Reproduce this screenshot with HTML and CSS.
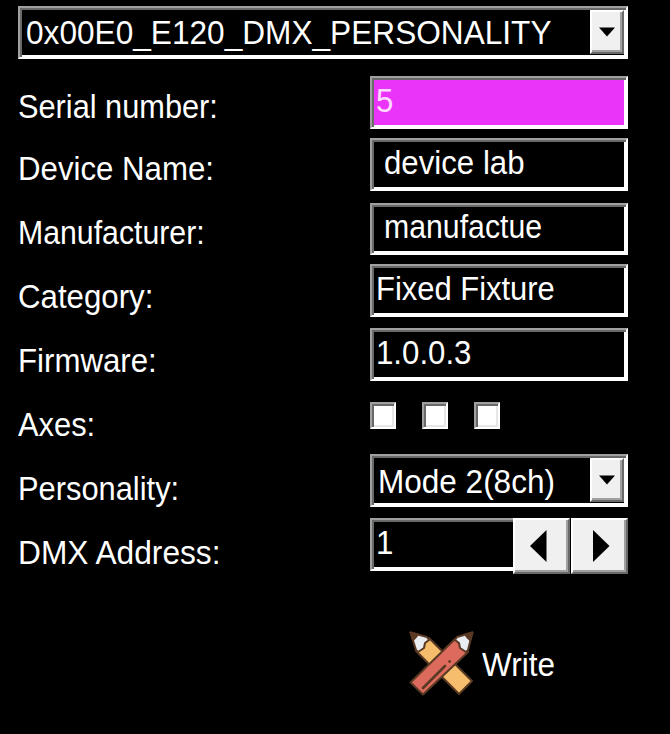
FILE: index.html
```html
<!DOCTYPE html>
<html lang="en">
<head>
<meta charset="utf-8">
<title>Device settings</title>
<link rel="stylesheet" href="styles.css">
</head>
<body>
<main class="panel">
  <div class="sunken combo parameter">
    <span class="text t-param">0x00E0_E120_DMX_PERSONALITY</span>
    <span class="drop"><svg width="16" height="10" viewBox="0 0 16 10"><path d="M0 .5H16L8 9.5Z"/></svg></span>
  </div>
  <div class="form">
    <div class="labels">
      <span class="text t-serial">Serial number:</span>
      <span class="text">Device Name:</span>
      <span class="text t-tight">Manufacturer:</span>
      <span class="text">Category:</span>
      <span class="text">Firmware:</span>
      <span class="text t-snug">Axes:</span>
      <span class="text t-snug">Personality:</span>
      <span class="text t-wide">DMX Address:</span>
    </div>
    <div class="fields">
      <div class="sunken serial"><span class="text">5</span></div>
      <div class="sunken device"><span class="text">device lab</span></div>
      <div class="sunken maker"><span class="text t-tight">manufactue</span></div>
      <div class="sunken category"><span class="text t-fixed">Fixed Fixture</span></div>
      <div class="sunken firmware"><span class="text">1.0.0.3</span></div>
      <div class="axes"><i class="check"></i><i class="check"></i><i class="check"></i></div>
      <div class="sunken combo personality">
        <span class="text t-mode">Mode 2(8ch)</span>
        <span class="drop"><svg width="16" height="10" viewBox="0 0 16 10"><path d="M0 .5H16L8 9.5Z"/></svg></span>
      </div>
      <div class="address">
        <div class="sunken number"><span class="text">1</span></div>
        <span class="step"><svg width="17" height="32" viewBox="0 0 17 32"><path d="M16.5 0V32L0 16Z"/></svg></span>
        <span class="step next"><svg width="17" height="32" viewBox="0 0 17 32"><path d="M0 0V32L16.5 16Z"/></svg></span>
      </div>
    </div>
  </div>
  <div class="write">
    <svg class="pencils" width="66" height="66" viewBox="0 0 66 66" stroke="#593923" stroke-width="2" stroke-linejoin="round">
      <path fill="#f5bd6c" d="M7 20L20 7L63 50L50 63Z"/>
      <path fill="#e9edf2" d="M1.500 1.500L18 6L20 9L16 12L15 17L9 21L7 19Z"/>
      <path fill="#593923" d="M1.500 1.500L9 3.500L7 6L4 9Z"/>
      <path fill="#dc6b5d" d="M46 8L59 21L14 63.500L1.500 51.500Z"/>
      <path fill="#e9edf2" d="M63.500 1.500L59 19L57 21L51 17L50 12L46 9L48 6Z"/>
      <path fill="#593923" d="M63.500 1.500L56 3.500L58 6L61 9Z"/>
      <path d="M14 57L36 35M40.500 30.500l.2-.2" fill="none" stroke-width="2.600" stroke-linecap="round"/>
    </svg>
    <span class="text t-mode">Write</span>
  </div>
</main>
</body>
</html>
```
FILE: styles.css
```css
* { box-sizing: border-box; }
body {
  margin: 0;
  background: #000;
  color: #fff;
  font: 34px/40px "Liberation Sans", Arial, sans-serif;
}
.panel { width: 670px; height: 734px; padding: 6px 42px 0 18px; }
.text {
  display: block;
  width: max-content;
  white-space: pre;
  transform: scaleX(.918);
  transform-origin: left;
}
.t-param { transform: scaleX(.93); }
.t-serial { transform: scaleX(.904); }
.t-tight { transform: scaleX(.89); }
.t-snug { transform: scaleX(.907); }
.t-wide { transform: scaleX(.932); }
.t-fixed { transform: scaleX(.91); }
.t-mode { transform: scaleX(.927); }
.sunken {
  height: 53px;
  border: 2px solid;
  border-color: #a0a0a0 #fff #fff #a0a0a0;
  box-shadow: inset 2px 2px #696969, inset -2px -2px #fff;
  padding: 2px 4px;
}
.combo { display: flex; justify-content: space-between; padding: 2px; }
.combo .text { flex: 0 1 auto; min-width: 0; margin: 2px 0 0 4px; }
.drop {
  flex: none;
  width: 34px;
  height: 44px;
  display: flex;
  align-items: center;
  justify-content: center;
  background: #f0f0f0;
  border: 2px solid;
  border-color: #fff #696969 #696969 #fff;
  box-shadow: inset -2px -2px #a0a0a0;
}
.form { display: flex; justify-content: space-between; padding-top: 17px; }
.labels { display: flex; flex-direction: column; gap: 24px; padding-top: 10px; }
.labels .t-serial { margin-bottom: -2px; }
.fields { width: 258px; }
.serial { background: #eb34fa; color: #ffd9ff; }
.device { margin-top: 9px; padding-left: 12px; }
.maker { height: 52px; margin-top: 12px; padding: 1px 4px 0 12px; }
.category { margin-top: 9px; }
.firmware { margin-top: 11px; }
.axes { display: flex; gap: 26px; margin-top: 21px; }
.check {
  width: 26px;
  height: 27px;
  background: #fff;
  border: 2px solid;
  border-color: #a0a0a0 #fff #fff #a0a0a0;
  box-shadow: inset 2px 2px #696969, inset -2px -2px #e7e7e7;
}
.personality { margin-top: 25px; }
.personality .text { margin-top: 3px; }
.address { display: flex; margin-top: 11px; }
.number { width: 143px; border-right: 0; box-shadow: inset 2px 2px #696969, inset 0 -2px #fff; }
.step {
  width: 57px;
  height: 56px;
  display: flex;
  align-items: center;
  justify-content: center;
  padding-right: 6px;
  background: #f0f0f0;
  border: 2px solid;
  border-color: #fff #696969 #696969 #fff;
  box-shadow: inset -2px -2px #a0a0a0;
}
.next { margin-left: 1px; padding: 0 0 0 3px; }
.write { display: flex; margin: 57px 0 0 391px; }
.write .text { margin: 13px 0 0 7px; }
.pencils { display: block; }
```
